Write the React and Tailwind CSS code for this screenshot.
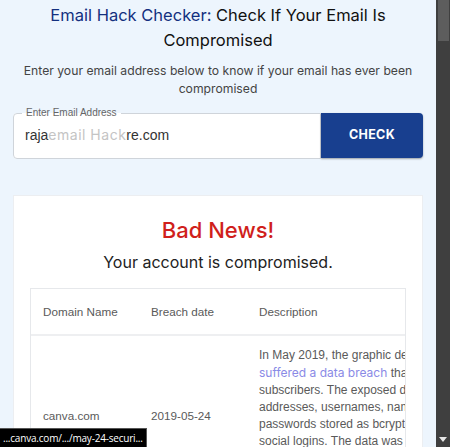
const descLines = [
  "In May 2019, the graphic design tool website Canva",
  null,
  "subscribers. The exposed data included email",
  "addresses, usernames, names, cities of residence and",
  "passwords stored as bcrypt hashes for users not using",
  "social logins. The data was provided to HIBP by a",
  "source who requested it be attributed to",
  "\"JimScott.Sec@protonmail.com\".",
];

const App = () => {
  return (
    <div className="w-[450px] h-[447px] flex overflow-hidden bg-[#3f3f3f]">
      <div className="w-[436px] h-full relative overflow-hidden bg-[#edf5fd] font-['Inter',sans-serif]">
        {/* Header */}
        <div className="pt-[3px] px-4 text-center">
          <h1 className="text-[16.5px] leading-[25px] font-normal text-[#111]">
            <span className="text-[#13307f]">Email Hack Checker:</span> Check If Your Email Is Compromised
          </h1>
          <p className="mt-[9px] text-[12.2px] leading-[18px] text-[#444]">
            Enter your email address below to know if your email has ever been compromised
          </p>
        </div>

        {/* Search */}
        <div className="mt-[10px] px-[13px] flex items-end">
          <fieldset className="flex-1 h-[51px] border border-[#cfd4da] rounded-l-[4px] bg-white px-[8px] min-w-0">
            <legend className="px-[4px] text-[10px] leading-[10px] text-[#666] font-['Liberation_Sans',Arial,sans-serif]">
              Enter Email Address
            </legend>
            <div className="pl-[3px] pt-[6px] text-[14px] text-[#333] font-['Liberation_Sans',Arial,sans-serif] whitespace-nowrap">
              raja<span className="text-[#c4c4c4] tracking-[0.5px] font-['Inter',sans-serif]">email Hack</span>re.com
            </div>
          </fieldset>
          <button className="w-[102px] h-[45px] mb-[1px] bg-[#183f8f] text-white text-[12.5px] font-bold rounded-r-[4px] shadow-[0_1px_2px_rgba(0,0,0,0.35)] tracking-[0.3px]">
            CHECK
          </button>
        </div>

        {/* Result card */}
        <div className="mt-[36px] mx-[13px] bg-white border border-[#eceef1] px-[16px] pt-[19px] pb-4">
          <h2 className="text-center text-[22px] leading-[30px] font-medium text-[#d01f1c]">Bad News!</h2>
          <p className="mt-[6px] text-center text-[16px] leading-[22px] text-[#222]">
            Your account is compromised.
          </p>
          <div className="mt-[15px] border-t border-l border-r border-[#e6e8eb] overflow-hidden font-['Liberation_Sans',Arial,sans-serif] text-[11.7px] text-[#5a5a5a]">
            <div className="flex h-[47px] items-center border-b-2 border-[#eeeff1] whitespace-nowrap">
              <div className="w-[108px] shrink-0 pl-[12px]">Domain Name</div>
              <div className="w-[108px] shrink-0 pl-[12px]">Breach date</div>
              <div className="shrink-0 pl-[12px]">Description</div>
            </div>
            <div className="flex items-center py-[11px] whitespace-nowrap">
              <div className="w-[108px] shrink-0 pl-[12px]">canva.com</div>
              <div className="w-[108px] shrink-0 pl-[12px]">2019-05-24</div>
              <div className="shrink-0 pl-[12px] leading-[17px] text-[12px]">
                {descLines.map((l, i) =>
                  l === null ? (
                    <div key={i}>
                      <span className="text-[#8a8ae6] font-['Inter',sans-serif]">suffered a data breach</span> that impacted 137 million
                    </div>
                  ) : (
                    <div key={i}>{l}</div>
                  )
                )}
              </div>
            </div>
          </div>
        </div>

        {/* Link status tooltip */}
        <div className="absolute left-0 bottom-0 w-[147px] h-[19px] bg-black border-t border-r border-[#555] text-white text-[10px] leading-[18px] pl-[3px] tracking-[-0.2px] font-['Open_Sans',sans-serif] whitespace-nowrap overflow-hidden">
          ...canva.com/.../may-24-securi...
        </div>
      </div>

      {/* Scrollbar */}
      <div className="w-[14px] h-full flex flex-col items-center bg-[#3f3f3f]">
        <div className="w-[11px] h-[41px] bg-[#5d5d5d]"></div>
        <div className="flex-1"></div>
        <svg width="8" height="5" viewBox="0 0 8 5" className="mb-[5px]">
          <path d="M0 0 L8 0 L4 5 Z" fill="#e6e6e6" />
        </svg>
      </div>
    </div>
  );
};

export default App;
